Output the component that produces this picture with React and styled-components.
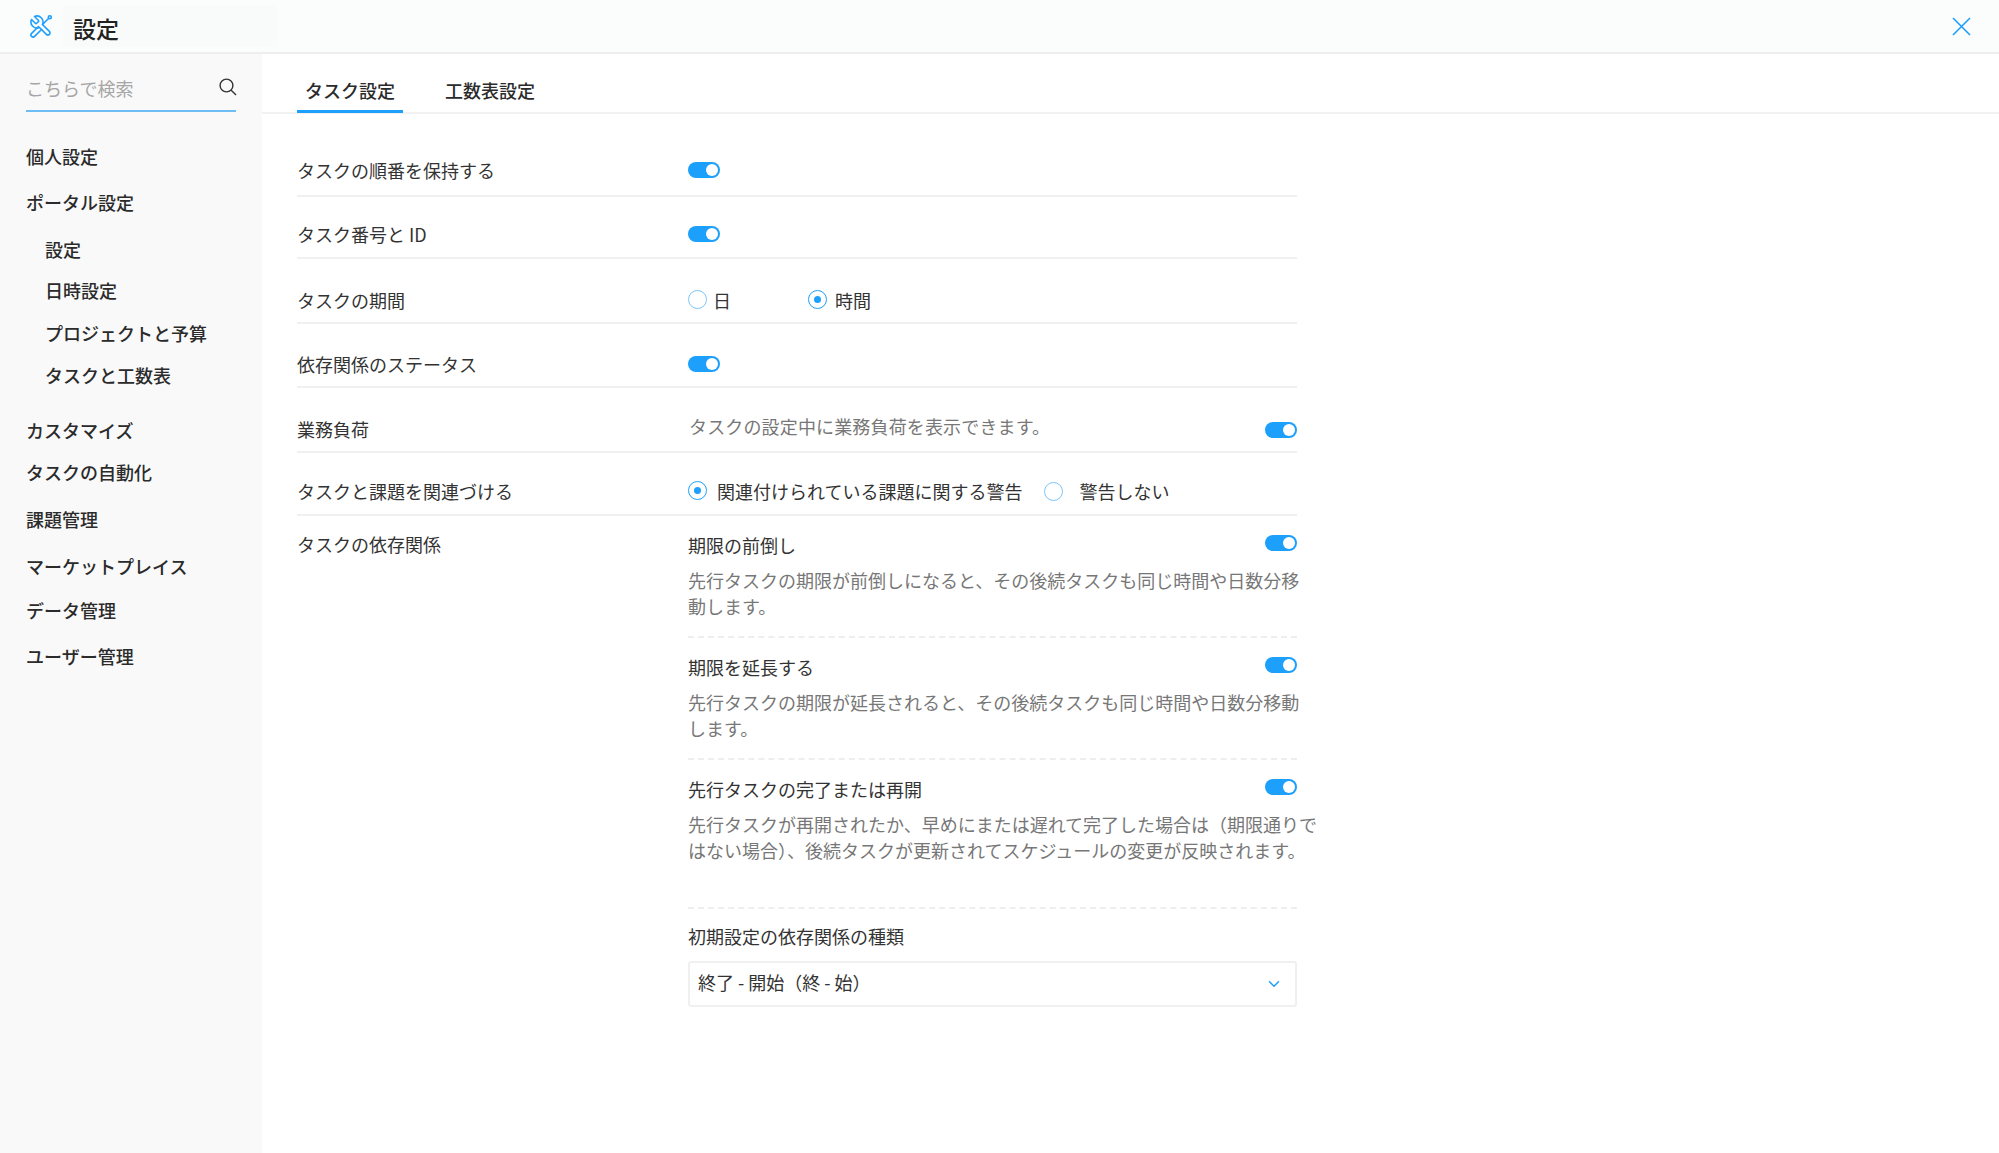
import React from "react";
import styled, { createGlobalStyle } from "styled-components";
import { ChevronDown } from "lucide-react";

const Global = createGlobalStyle`
  html, body { margin: 0; padding: 0; background: #fff; }
  body { font-family: "Noto Sans CJK JP", "Noto Sans", sans-serif; color: #333; overflow: hidden; }
  * { box-sizing: border-box; }
`;

const Page = styled.div`
  width: 1999px;
  height: 1153px;
  display: flex;
  flex-direction: column;
  overflow: hidden;
`;
const Header = styled.header`
  height: 54px;
  flex: none;
  display: flex;
  align-items: center;
  padding: 0 29px;
  background: #fbfcfc;
  border-bottom: 2px solid #eeeeee;
`;
const Title = styled.h1`
  margin: 0 0 0 10px;
  padding: 0 0 0 10px;
  width: 214px;
  height: 42px;
  line-height: 46px;
  font-size: 23px;
  font-weight: 500;
  color: #222;
  background: #f9fafa;
`;
const CloseButton = styled.button`
  margin-left: auto;
  margin-right: -1px;
  padding: 0;
  border: 0;
  background: none;
  display: flex;
  color: #1d9ffc;
`;
const Body = styled.div`
  flex: 1;
  display: flex;
  min-height: 0;
`;
const Sidebar = styled.aside`
  width: 262px;
  flex: none;
  background: #f9f9f9;
  padding: 18px 26px 0;
`;
const Search = styled.div`
  width: 210px;
  height: 40px;
  display: flex;
  align-items: flex-start;
  justify-content: space-between;
  border-bottom: 2px solid #6fbdf5;
`;
const SearchText = styled.span`
  font-size: 18px;
  line-height: 26px;
  margin-top: 3px;
  color: #a6a6a6;
`;
const SearchIcon = styled.svg`
  margin: 6px -1px 0 0;
`;
const NavList = styled.nav`
  display: flex;
  flex-direction: column;
  margin-top: 31px;
`;
const NavItem = styled.a`
  display: block;
  font-size: 18px;
  line-height: 26px;
  font-weight: 500;
  color: #2b2b2b;
  margin-top: ${(p) => p.$top || 0}px;
  padding-left: ${(p) => (p.$sub ? 19 : 0)}px;
`;
const Main = styled.main`
  flex: 1;
  min-width: 0;
`;
const Tabs = styled.div`
  height: 60px;
  display: flex;
  align-items: flex-end;
  padding-left: 35px;
  border-bottom: 2px solid #f1f1f1;
`;
const Tab = styled.div`
  height: 47px;
  padding: 11px 8px 0;
  margin-right: 34px;
  margin-bottom: -1px;
  font-size: 18px;
  line-height: 26px;
  font-weight: 500;
  color: #2b2b2b;
  border-bottom: 3px solid ${(p) => (p.$active ? "#1d9ffc" : "transparent")};
`;
const Settings = styled.section`
  width: 1000px;
  margin: 19px 0 0 35px;
`;
const Row = styled.div`
  display: grid;
  grid-template-columns: 391px minmax(0, 1fr);
  height: ${(p) => p.$h}px;
  align-items: end;
  padding-bottom: ${(p) => p.$pad || 9}px;
  border-bottom: 2px solid #f0f0f0;
`;
const Label = styled.div`
  font-size: 18px;
  line-height: 26px;
  color: #333;
`;
const RowControl = styled.div`
  display: flex;
  align-items: center;
  justify-content: ${(p) => (p.$spread ? "space-between" : "flex-start")};
  min-height: 26px;
`;
const Toggle = styled.span`
  display: flex;
  justify-content: flex-end;
  align-items: center;
  width: 32px;
  height: 16px;
  padding-right: 2px;
  border-radius: 8px;
  background: #1d9ffc;
  flex: none;
  &::after {
    content: "";
    width: 12px;
    height: 12px;
    border-radius: 50%;
    background: #fff;
  }
`;
const RadioItem = styled.label`
  display: flex;
  align-items: center;
  gap: ${(p) => p.$gap}px;
  margin-right: ${(p) => p.$after || 0}px;
  font-size: 18px;
  line-height: 26px;
  color: #333;
`;
const RadioMark = styled.span`
  width: 19px;
  height: 19px;
  border-radius: 50%;
  border: 1.5px solid ${(p) => (p.$on ? "#1d9ffc" : "#7cc6fb")};
  display: flex;
  align-items: center;
  justify-content: center;
  margin-top: ${(p) => (p.$low ? 1 : -2)}px;
  &::after {
    content: "";
    width: 7px;
    height: 7px;
    border-radius: 50%;
    background: ${(p) => (p.$on ? "#1d9ffc" : "transparent")};
  }
`;
const Hint = styled.span`
  font-size: 18px;
  line-height: 26px;
  letter-spacing: 0.15px;
  color: #777;
  padding-left: 1px;
  margin-bottom: 3px;
`;
const HintToggle = styled(Toggle)`
  margin-top: 5px;
`;
const DependencyRow = styled.div`
  display: grid;
  grid-template-columns: 391px minmax(0, 1fr);
`;
const DependencyLabel = styled(Label)`
  padding-top: 15px;
`;
const Block = styled.div`
  padding: 16px 0 ${(p) => p.$bottom}px;
  border-bottom: 2px dashed #eeeeee;
`;
const BlockHead = styled.div`
  display: flex;
  justify-content: space-between;
  font-size: 18px;
  line-height: 26px;
  color: #333;
`;
const HeadToggle = styled(Toggle)`
  margin-top: 3px;
`;
const Description = styled.p`
  margin: 10px 0 0;
  font-size: 18px;
  line-height: 25.5px;
  color: #777;
  white-space: nowrap;
`;
const SelectLabel = styled.div`
  font-size: 18px;
  line-height: 26px;
  color: #333;
  margin-top: 14px;
`;
const Select = styled.div`
  margin-top: 12px;
  height: 46px;
  display: flex;
  align-items: center;
  justify-content: space-between;
  padding: 0 12px 4px 8px;
  border: 2px solid #f0f0f0;
  border-radius: 3px;
  font-size: 18px;
  color: #333;
`;
const SelectChevron = styled(ChevronDown)`
  margin-top: 4px;
`;

const nav = [
  ["個人設定", 0, false],
  ["ポータル設定", 20, false],
  ["設定", 21, true],
  ["日時設定", 15, true],
  ["プロジェクトと予算", 17, true],
  ["タスクと工数表", 16, true],
  ["カスタマイズ", 29, false],
  ["タスクの自動化", 16, false],
  ["課題管理", 21, false],
  ["マーケットプレイス", 21, false],
  ["データ管理", 18, false],
  ["ユーザー管理", 20, false],
];

export default function App() {
  return (
    <Page>
      <Global />
      <Header>
        <svg width="24" height="24" viewBox="0 0 24 24" fill="none" stroke="#1d9ffc" strokeWidth="1.6" strokeLinejoin="round" strokeLinecap="round">
          <path transform="translate(24 0) scale(-1 1)" d="M14.7 6.3a1 1 0 0 0 0 1.4l1.6 1.6a1 1 0 0 0 1.4 0l3.77-3.77a6 6 0 0 1-7.94 7.94l-6.91 6.91a2.12 2.12 0 0 1-3-3l6.91-6.91a6 6 0 0 1 7.94-7.94l-3.76 3.76z" />
          <path d="M9.5 12.5 2.6 19.4a2.1 2.1 0 0 0 3 3l6.9-6.9" />
          <path d="m13.5 10.5 6-6" />
          <circle cx="20.8" cy="3.2" r="1.5" />
        </svg>
        <Title>設定</Title>
        <CloseButton aria-label="閉じる">
          <svg width="19" height="19" viewBox="0 0 19 19" fill="none" stroke="currentColor" strokeWidth="1.6">
            <path d="M1 1l17 17M18 1 1 18" />
          </svg>
        </CloseButton>
      </Header>
      <Body>
        <Sidebar>
          <Search>
            <SearchText>こちらで検索</SearchText>
            <SearchIcon width="18" height="18" viewBox="0 0 18 18" fill="none" stroke="#333" strokeWidth="1.4">
              <circle cx="7.5" cy="7.5" r="6.4" />
              <path d="M12.2 12.2 17 17" />
            </SearchIcon>
          </Search>
          <NavList>
            {nav.map(([text, top, sub]) => (
              <NavItem key={text} $top={top} $sub={sub}>{text}</NavItem>
            ))}
          </NavList>
        </Sidebar>
        <Main>
          <Tabs>
            <Tab $active>タスク設定</Tab>
            <Tab>工数表設定</Tab>
          </Tabs>
          <Settings>
            <Row $h={64} $pad={12}>
              <Label>タスクの順番を保持する</Label>
              <RowControl><Toggle /></RowControl>
            </Row>
            <Row $h={62} $pad={10}>
              <Label>タスク番号と ID</Label>
              <RowControl><Toggle /></RowControl>
            </Row>
            <Row $h={65}>
              <Label>タスクの期間</Label>
              <RowControl>
                <RadioItem $gap={6} $after={77}><RadioMark />日</RadioItem>
                <RadioItem $gap={8}><RadioMark $on />時間</RadioItem>
              </RowControl>
            </Row>
            <Row $h={64}>
              <Label>依存関係のステータス</Label>
              <RowControl><Toggle /></RowControl>
            </Row>
            <Row $h={65}>
              <Label>業務負荷</Label>
              <RowControl $spread>
                <Hint>タスクの設定中に業務負荷を表示できます。</Hint>
                <HintToggle />
              </RowControl>
            </Row>
            <Row $h={63} $pad={10}>
              <Label>タスクと課題を関連づける</Label>
              <RowControl>
                <RadioItem $gap={10} $after={22}><RadioMark $on />関連付けられている課題に関する警告</RadioItem>
                <RadioItem $gap={16}><RadioMark $low />警告しない</RadioItem>
              </RowControl>
            </Row>
            <DependencyRow>
              <DependencyLabel>タスクの依存関係</DependencyLabel>
              <div>
                <Block $bottom={17}>
                  <BlockHead>期限の前倒し<HeadToggle /></BlockHead>
                  <Description>
                    先行タスクの期限が前倒しになると、その後続タスクも同じ時間や日数分移<br />動します。
                  </Description>
                </Block>
                <Block $bottom={17}>
                  <BlockHead>期限を延長する<HeadToggle /></BlockHead>
                  <Description>
                    先行タスクの期限が延長されると、その後続タスクも同じ時間や日数分移動<br />します。
                  </Description>
                </Block>
                <Block $bottom={44}>
                  <BlockHead>先行タスクの完了または再開<HeadToggle /></BlockHead>
                  <Description>
                    先行タスクが再開されたか、早めにまたは遅れて完了した場合は（期限通りで<br />はない場合）、後続タスクが更新されてスケジュールの変更が反映されます。
                  </Description>
                </Block>
                <SelectLabel>初期設定の依存関係の種類</SelectLabel>
                <Select>
                  終了 - 開始（終 - 始）
                  <SelectChevron size={18} color="#1d9ffc" strokeWidth={2} />
                </Select>
              </div>
            </DependencyRow>
          </Settings>
        </Main>
      </Body>
    </Page>
  );
}
